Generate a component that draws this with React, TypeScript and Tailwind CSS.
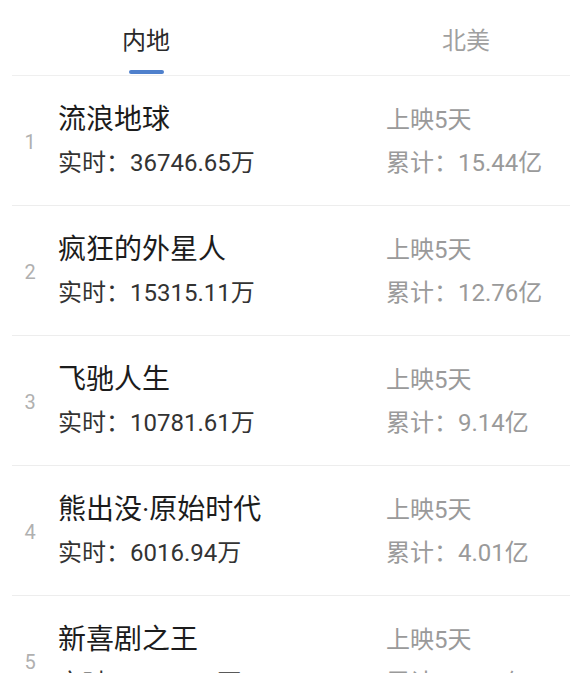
import React from 'react';

const movies = [
  { rank: 1, title: '流浪地球', realtime: '36746.65万', days: '上映5天', total: '15.44亿' },
  { rank: 2, title: '疯狂的外星人', realtime: '15315.11万', days: '上映5天', total: '12.76亿' },
  { rank: 3, title: '飞驰人生', realtime: '10781.61万', days: '上映5天', total: '9.14亿' },
  { rank: 4, title: '熊出没·原始时代', realtime: '6016.94万', days: '上映5天', total: '4.01亿' },
  { rank: 5, title: '新喜剧之王', realtime: '3065.58万', days: '上映5天', total: '5.06亿' },
];

export default function App() {
  return (
    <div className="w-[570px] h-[673px] overflow-hidden bg-white font-['Roboto','Noto_Sans_CJK_SC',sans-serif]">
      {/* Tabs */}
      <div className="ml-[12px] border-b border-[#efefef] flex">
        <div className="ml-[110px] flex flex-col items-center pt-[25px] pb-[1px]">
          <span className="text-[24px] leading-[32px] text-[#2a2a2a]">内地</span>
          <span className="mt-[13px] w-[35px] h-[4px] rounded-full bg-[#4f80cc]" />
        </div>
        <div className="ml-auto mr-[80px] pt-[25px]">
          <span className="text-[24px] leading-[32px] text-[#a0a0a0]">北美</span>
        </div>
      </div>

      {/* Box office list */}
      <div>
        {movies.map(m => (
          <div key={m.rank} className="ml-[12px] flex items-center border-b border-[#ededed] pt-[24px] pb-[22px]">
            <div className="w-[36px] text-center text-[20px] text-[#b0b0b0]">{m.rank}</div>
            <div className="ml-[10px] w-[328px]">
              <div className="text-[28px] leading-[40px] text-[#1c1c1c]">{m.title}</div>
              <div className="mt-[3px] text-[24px] leading-[40px] text-[#333]">实时：{m.realtime}</div>
            </div>
            <div>
              <div className="text-[24px] leading-[40px] text-[#9a9a9a]">{m.days}</div>
              <div className="mt-[3px] text-[24px] leading-[40px] text-[#9a9a9a]">累计：{m.total}</div>
            </div>
          </div>
        ))}
      </div>
    </div>
  );
}
